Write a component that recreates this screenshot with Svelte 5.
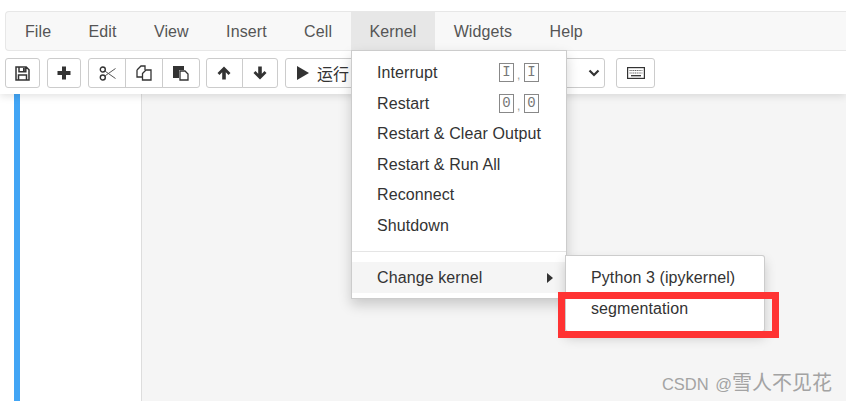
<script>
  const menus = ["File", "Edit", "View", "Insert", "Cell", "Kernel", "Widgets", "Help"];
  const kernelItems = [
    { label: "Interrupt", keys: ["I", "I"] },
    { label: "Restart", keys: ["0", "0"] },
    { label: "Restart & Clear Output" },
    { label: "Restart & Run All" },
    { label: "Reconnect" },
    { label: "Shutdown" }
  ];
</script>

<div class="page">
  <header class="head">
    <nav class="menubar">
      {#each menus as menu}
        <div class="menu" class:open={menu === "Kernel"}>{menu}</div>
      {/each}
    </nav>
    <div class="toolbar">
      <div class="group">
        <button class="btn save" type="button" aria-label="save">
          <svg viewBox="0 0 15 15" width="15" height="15"><path d="M1 1h10.200L14 3.800V14H1z M4 1.200v4.600h6.800V1.200 M3.500 13.800V9h8v4.800" fill="none" stroke="#333" stroke-width="1.500"/><rect x="8" y="2" width="1.800" height="3" fill="#333"/></svg>
        </button>
      </div>
      <div class="group">
        <button class="btn add" type="button" aria-label="add">
          <svg viewBox="0 0 14 14" width="14" height="14"><path d="M5 .5h4v4.500h4.500v4H9v4.500H5V9H.5V5H5z" fill="#333"/></svg>
        </button>
      </div>
      <div class="group">
        <button class="btn clip" type="button" aria-label="cut">
          <svg viewBox="0 0 17 15" width="17" height="15"><circle cx="3.800" cy="3.500" r="2.500" fill="none" stroke="#333" stroke-width="1.400"/><circle cx="3.800" cy="11.500" r="2.500" fill="none" stroke="#333" stroke-width="1.400"/><path d="M5.800 5L16.500 12.500M5.800 10L16.500 2.500" fill="none" stroke="#555" stroke-width="1"/></svg>
        </button>
        <button class="btn clip" type="button" aria-label="copy">
          <svg viewBox="0 0 16 16" width="16" height="16"><path d="M1 5L5 1h4v4M1 5v7h5" fill="none" stroke="#333" stroke-width="1.300"/><path d="M6.500 8.500l3.500-3.500h5v10H6.500z" fill="#fff" stroke="#333" stroke-width="1.300"/></svg>
        </button>
        <button class="btn clip" type="button" aria-label="paste">
          <svg viewBox="0 0 16 16" width="16" height="16"><path d="M0 1h11v4H6v8H0z" fill="#333"/><path d="M7 6h5l3 3v6H7z" fill="#fff" stroke="#333" stroke-width="1.300"/></svg>
        </button>
      </div>
      <div class="group moves">
        <button class="btn move" type="button" aria-label="up">
          <svg viewBox="0 0 14 14" width="14" height="14"><path d="M7 .5l6.500 6.500-2 2L8.800 6.300V13.500H5.200V6.300L2.500 9 .5 7z" fill="#333"/></svg>
        </button>
        <button class="btn move" type="button" aria-label="down">
          <svg viewBox="0 0 14 14" width="14" height="14"><path d="M7 13.500L.5 7l2-2 2.700 2.700V.5h3.600v7.200L11.500 5l2 2z" fill="#333"/></svg>
        </button>
      </div>
      <div class="group">
        <button class="btn run" type="button">
          <svg viewBox="0 0 12 14" width="12" height="14"><path d="M0 0l12 7-12 7z" fill="#333"/></svg>
          <span>运行</span>
        </button>
        <div class="select">
          <svg viewBox="0 0 12 8" width="12" height="8"><path d="M1.500 1.500L6 6l4.500-4.500" fill="none" stroke="#333" stroke-width="2.200"/></svg>
        </div>
      </div>
      <button class="btn keys" type="button" aria-label="keyboard">
        <svg viewBox="0 0 18 12" width="18" height="12"><rect x=".6" y=".6" width="16.800" height="10.800" fill="#fff" stroke="#333" stroke-width="1.200"/><path d="M2.500 3.500h13M2.500 6h13" stroke="#666" stroke-width="1.200" stroke-dasharray="1.200 .6"/><path d="M4 8.700h10" stroke="#333" stroke-width="1.300"/></svg>
      </button>
    </div>

    <div class="dropdown kernel">
      <ul class="list">
        {#each kernelItems as item}
          <li class="item">
            <span>{item.label}</span>
            {#if item.keys}
              <span class="shortcut">
                <kbd>{item.keys[0]}</kbd><i>,</i><kbd>{item.keys[1]}</kbd>
              </span>
            {/if}
          </li>
        {/each}
      </ul>
      <div class="divider"></div>
      <div class="item change">
        <span>Change kernel</span>
        <svg viewBox="0 0 6 10" width="6" height="10"><path d="M0 0l6 5-6 5z" fill="#333"/></svg>
      </div>
    </div>

    <div class="dropdown sub">
      <div class="subitem">Python 3 (ipykernel)</div>
      <div class="subitem">segmentation</div>
    </div>
    <div class="highlight"></div>
  </header>

  <main class="body">
    <aside class="gutter"><div class="bar"></div></aside>
    <div class="canvas"></div>
  </main>
  <div class="mark">CSDN @<span>雪人不见花</span></div>
</div>

<style>
  :global(body) {
    margin: 0;
    background: #f5f5f5;
  }

  .page {
    position: relative;
    width: 846px;
    height: 401px;
    overflow: hidden;
    display: flex;
    flex-direction: column;
    font-family: "Liberation Sans", Arial, "Noto Sans CJK SC", sans-serif;
    letter-spacing: 0.1px;
    color: #333;
  }

  .head {
    position: relative;
    z-index: 2;
    height: 94px;
    box-sizing: border-box;
    padding: 11px 0 0 5px;
    background: #fff;
    box-shadow: 0 2px 8px rgba(0, 0, 0, 0.12);
    flex: none;
  }

  .menubar {
    display: flex;
    height: 40px;
    box-sizing: border-box;
    border: 1px solid #e7e7e7;
    border-right: 0;
    border-radius: 4px 0 0 4px;
    background: #f8f8f8;
  }

  .menu {
    padding: 0 18.7px;
    font-size: 16px;
    line-height: 39px;
    color: #555;
  }

  .menu:first-child {
    padding-left: 19px;
  }

  .menu.open {
    background: #e7e7e7;
  }

  .toolbar {
    display: flex;
    gap: 7px;
    margin-top: 7px;
  }

  .group {
    display: flex;
  }

  .moves {
    margin-left: -1px;
  }

  .btn {
    display: flex;
    align-items: center;
    justify-content: center;
    height: 30px;
    margin: 0;
    padding: 0;
    box-sizing: border-box;
    border: 1px solid #ccc;
    border-radius: 3px;
    background: #fff;
    font: inherit;
    color: #333;
  }

  .group .btn + .btn {
    margin-left: -1px;
    border-radius: 0 3px 3px 0;
  }

  .group .btn:not(:last-child) {
    border-radius: 3px 0 0 3px;
  }

  .group .btn:not(:first-child):not(:last-child) {
    border-radius: 0;
  }

  .save {
    width: 35px;
  }

  .add {
    width: 34px;
  }

  .clip {
    width: 38px;
  }

  .move {
    width: 36.5px;
  }

  .run {
    width: 115px;
    justify-content: flex-start;
    gap: 8px;
    padding-left: 11px;
    font-size: 16px;
  }

  .select {
    display: flex;
    align-items: center;
    justify-content: flex-end;
    width: 206px;
    height: 30px;
    margin-left: -1px;
    padding-right: 4px;
    box-sizing: border-box;
    border: 1px solid #ccc;
    border-radius: 0 3px 3px 0;
    background: #fff;
  }

  .keys {
    width: 39px;
    margin-left: 4px;
  }

  .dropdown {
    position: absolute;
    box-sizing: border-box;
    border: 1px solid rgba(0, 0, 0, 0.2);
    background: #fff;
    font-size: 16px;
    color: #333;
    white-space: nowrap;
  }

  .kernel {
    top: 50px;
    left: 351px;
    width: 216px;
    height: 249px;
    padding-top: 6.7px;
    box-shadow: 0 6px 12px rgba(0, 0, 0, 0.18);
  }

  .list {
    margin: 0;
    padding: 0;
    list-style: none;
  }

  .item {
    display: flex;
    align-items: center;
    justify-content: space-between;
    height: 30.6px;
    padding: 0 26px 0 25px;
  }

  .shortcut {
    display: flex;
    align-items: flex-end;
    gap: 3px;
    margin-right: 1px;
  }

  .shortcut i {
    width: 4px;
    font-style: normal;
    font-size: 12px;
    color: #999;
  }

  kbd {
    display: block;
    width: 15px;
    height: 19px;
    box-sizing: border-box;
    border: 1px solid #888;
    font: 14px/17px "Liberation Mono", monospace;
    text-align: center;
    color: #777;
  }

  .divider {
    height: 1px;
    margin: 10px 0 9.8px;
    background: #e5e5e5;
  }

  .change {
    height: 31px;
    background: #f5f5f5;
    padding-right: 13px;
  }

  .sub {
    top: 255px;
    left: 565px;
    width: 200px;
    height: 77px;
    padding-top: 6px;
    border-radius: 0 3px 3px 3px;
    box-shadow: 0 6px 12px rgba(0, 0, 0, 0.18);
  }

  .subitem {
    height: 31px;
    padding-left: 25px;
    line-height: 31px;
  }

  .highlight {
    position: absolute;
    top: 292px;
    left: 558px;
    width: 221px;
    height: 46px;
    box-sizing: border-box;
    border: 7px solid #ff3333;
  }

  .body {
    display: flex;
    flex: 1;
  }

  .gutter {
    width: 142px;
    padding-left: 14px;
    box-sizing: border-box;
    background: #fff;
    border-right: 1px solid #ddd;
    flex: none;
  }

  .bar {
    width: 6px;
    height: 100%;
    background: #42a5f5;
  }

  .canvas {
    flex: 1;
    background: #f5f5f5;
  }

  .mark {
    position: absolute;
    z-index: 3;
    right: 14px;
    bottom: 5px;
    font-size: 16.5px;
    word-spacing: 2px;
    color: #a3a3a3;
    letter-spacing: 0;
  }

  .mark span {
    font-size: 20px;
  }
</style>
